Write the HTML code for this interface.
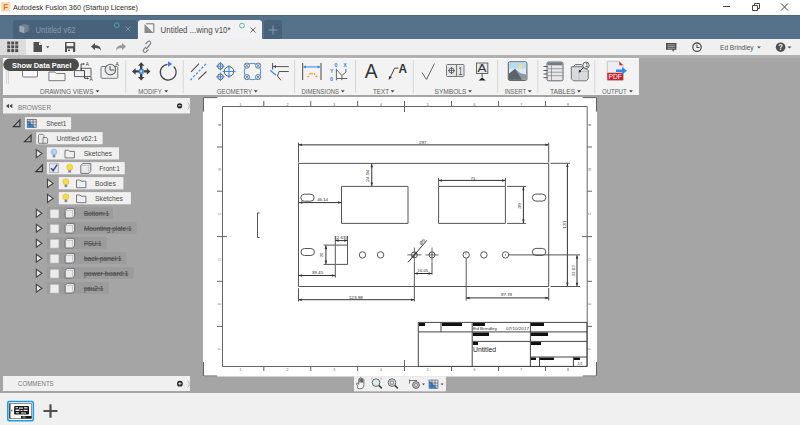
<!DOCTYPE html>
<html><head><meta charset="utf-8">
<style>
*{margin:0;padding:0}
html,body{width:800px;height:425px;overflow:hidden;background:#a5a5a5}
svg{position:absolute;left:0;top:0;font-family:"Liberation Sans",sans-serif}
</style></head><body>
<svg width="800" height="425" viewBox="0 0 800 425">
<rect x="0" y="0" width="800" height="425" fill="#a5a5a5"/>
<rect x="0" y="0" width="800" height="15" fill="#ffffff"/>
<rect x="1" y="2" width="9.5" height="9.5" fill="#fbdcb8"/>
<text x="3.20" y="10.00" font-size="9.01" fill="#e07a1f" font-weight="bold" textLength="5.00" lengthAdjust="spacingAndGlyphs">F</text>
<text x="13.00" y="10.00" font-size="7.99" fill="#2a2a2a" textLength="125.00" lengthAdjust="spacingAndGlyphs">Autodesk Fusion 360 (Startup License)</text>
<path d="M723 6.5h7" stroke="#444" stroke-width="1" fill="none"/>
<path d="M752.5 5.5h5v5h-5z M754.5 5.5v-2h5v5h-2" stroke="#444" stroke-width="1" fill="none"/>
<path d="M781 3.5l7 7M788 3.5l-7 7" stroke="#444" stroke-width="1" fill="none"/>
<rect x="0" y="15" width="800" height="24" fill="#56718a"/>
<rect x="0" y="15" width="800" height="0.6" fill="#4a6178"/>
<path d="M13 39V23a3 3 0 0 1 3-3h118a3 3 0 0 1 3 3v16z" stroke="none" stroke-width="1" fill="#48627b"/>
<path d="M19.5 25.8l4.5-1.8l4.8 1.2v5.8l-4.5 2l-4.8-1.4z" stroke="none" stroke-width="1" fill="#6f8090"/>
<path d="M19.5 25.8l4.8 1.3v6.1l-4.8-1.4z" stroke="none" stroke-width="1" fill="#9aa8b4"/>
<text x="35.60" y="32.60" font-size="8.43" fill="#8a9aa9" textLength="40.00" lengthAdjust="spacingAndGlyphs">Untitled v62</text>
<circle cx="116.8" cy="25.2" r="2.4" stroke="#45b29a" stroke-width="0.9" fill="none"/>
<path d="M125.5 26.5l5 5M130.5 26.5l-5 5" stroke="#7f8f9e" stroke-width="1" fill="none"/>
<path d="M138 39V23a3 3 0 0 1 3-3h118a3 3 0 0 1 3 3v16z" stroke="none" stroke-width="1" fill="#f2f2f4"/>
<path d="M144.5 23.5h9.5v9.5z" stroke="none" stroke-width="1" fill="none"/>
<path d="M144.5 24v9h9z" stroke="none" stroke-width="1" fill="#8a8a8a"/>
<path d="M146 23.8h7.8v9" stroke="#555" stroke-width="0.8" fill="none"/>
<text x="160.60" y="32.60" font-size="8.43" fill="#4a4a4a" textLength="70.00" lengthAdjust="spacingAndGlyphs">Untitled ...wing v10*</text>
<circle cx="242" cy="25.6" r="2.4" stroke="#45b29a" stroke-width="0.9" fill="none"/>
<path d="M250.5 27.5l5 5M255.5 27.5l-5 5" stroke="#666" stroke-width="1" fill="none"/>
<path d="M264 39V22a2 2 0 0 1 2-2h14a2 2 0 0 1 2 2v17z" stroke="none" stroke-width="1" fill="#48627b"/>
<path d="M268.5 30h9M273 25.5v9" stroke="#8d9cab" stroke-width="1" fill="none"/>
<rect x="0" y="39" width="800" height="16" fill="#f0f0f0"/>
<rect x="0" y="39" width="26" height="16" fill="#dcdcdc"/>
<rect x="7.2" y="41.5" width="3" height="3" fill="#505050"/>
<rect x="7.2" y="45.3" width="3" height="3" fill="#505050"/>
<rect x="7.2" y="49.1" width="3" height="3" fill="#505050"/>
<rect x="11.2" y="41.5" width="3" height="3" fill="#505050"/>
<rect x="11.2" y="45.3" width="3" height="3" fill="#505050"/>
<rect x="11.2" y="49.1" width="3" height="3" fill="#505050"/>
<rect x="15.2" y="41.5" width="3" height="3" fill="#505050"/>
<rect x="15.2" y="45.3" width="3" height="3" fill="#505050"/>
<rect x="15.2" y="49.1" width="3" height="3" fill="#505050"/>
<path d="M33.5 42h5.5l3 3v7h-8.5z" stroke="none" stroke-width="1" fill="#505050"/>
<path d="M39 42v3h3" stroke="none" stroke-width="1" fill="#f0f0f0"/>
<path d="M46 46.3h3.4l-1.7 2z" stroke="none" stroke-width="1" fill="#505050"/>
<path d="M65 42h9.5l0.7 0.7v9.3h-10.2z" stroke="none" stroke-width="1" fill="#505050"/>
<rect x="66.5" y="43" width="7" height="3.2" fill="#f0f0f0"/>
<rect x="67" y="48.5" width="6" height="3.5" fill="#f0f0f0"/>
<rect x="68" y="49.5" width="2" height="1.5" fill="#505050"/>
<path d="M91 46.5l4-3.5v2.2c3.5 0 6 1.5 6 5.5c-1-2-3-2.6-6-2.6v2.2z" stroke="none" stroke-width="1" fill="#505050"/>
<path d="M126 46.5l-4-3.5v2.2c-3.5 0-6 1.5-6 5.5c1-2 3-2.6 6-2.6v2.2z" stroke="none" stroke-width="1" fill="#9a9a9a"/>
<path d="M146 47l-2.5 2.5a1.8 1.8 0 0 0 2.5 2.5l2.5-2.5M148 46.5l2.5-2.5a1.8 1.8 0 0 0-2.5-2.5l-2.5 2.5M146 49l3.5-3.5" stroke="#808080" stroke-width="1.1" fill="none"/>
<path d="M666 43h10.4v6.8h-2l-1.2 2l-1.2-2h-6z" stroke="none" stroke-width="1" fill="#505050"/>
<path d="M667.6 44.9h7.2M667.6 46.6h7.2M667.6 48.3h7.2" stroke="#d8d8d8" stroke-width="0.6" fill="none"/>
<circle cx="697" cy="47.2" r="4.2" stroke="#505050" stroke-width="1.3" fill="none"/>
<path d="M697 44.5v3h2.5" stroke="#505050" stroke-width="1.1" fill="none"/>
<text x="720.00" y="50.00" font-size="7.85" fill="#555555" textLength="33.60" lengthAdjust="spacingAndGlyphs">Ed Brindley</text>
<path d="M757 46.5h4l-2 2z" stroke="none" stroke-width="1" fill="#505050"/>
<circle cx="780.6" cy="47.2" r="4.8" stroke="none" stroke-width="1" fill="#505050"/>
<text x="778.30" y="50.20" font-size="9.01" fill="#f0f0f0" font-weight="bold" textLength="4.60" lengthAdjust="spacingAndGlyphs">?</text>
<path d="M787.5 46.5h4l-2 2z" stroke="none" stroke-width="1" fill="#505050"/>
<rect x="0" y="55" width="800" height="3" fill="#b0b0b0"/>
<rect x="3" y="58" width="636" height="37" fill="#f3f3f3"/>
<path d="M3.5 95V58.5H639" stroke="#fcfcfc" stroke-width="1" fill="none"/>
<path d="M6.5 60v24M8.5 60v24" stroke="#cfcfcf" stroke-width="0.8" fill="none"/>
<path d="M125.75 60v33" stroke="#d6d6d6" stroke-width="1" fill="none"/>
<path d="M183.2 60v33" stroke="#d6d6d6" stroke-width="1" fill="none"/>
<path d="M294.6 60v33" stroke="#d6d6d6" stroke-width="1" fill="none"/>
<path d="M355.6 60v33" stroke="#d6d6d6" stroke-width="1" fill="none"/>
<path d="M413.3 60v33" stroke="#d6d6d6" stroke-width="1" fill="none"/>
<path d="M497.7 60v33" stroke="#d6d6d6" stroke-width="1" fill="none"/>
<path d="M537.9 60v33" stroke="#d6d6d6" stroke-width="1" fill="none"/>
<path d="M594.8 60v33" stroke="#d6d6d6" stroke-width="1" fill="none"/>
<text x="40.00" y="93.70" font-size="6.83" fill="#5f5f5f" textLength="53.50" lengthAdjust="spacingAndGlyphs">DRAWING VIEWS</text>
<path d="M95.6 90.3h3.8l-1.9 2.3z" stroke="none" stroke-width="1" fill="#444"/>
<text x="138.20" y="93.70" font-size="6.83" fill="#5f5f5f" textLength="23.50" lengthAdjust="spacingAndGlyphs">MODIFY</text>
<path d="M164.4 90.3h3.8l-1.9 2.3z" stroke="none" stroke-width="1" fill="#444"/>
<text x="216.80" y="93.70" font-size="6.83" fill="#5f5f5f" textLength="35.20" lengthAdjust="spacingAndGlyphs">GEOMETRY</text>
<path d="M253.9 90.3h3.8l-1.9 2.3z" stroke="none" stroke-width="1" fill="#444"/>
<text x="301.60" y="93.70" font-size="6.83" fill="#5f5f5f" textLength="37.40" lengthAdjust="spacingAndGlyphs">DIMENSIONS</text>
<path d="M340.90000000000003 90.3h3.8l-1.9 2.3z" stroke="none" stroke-width="1" fill="#444"/>
<text x="373.00" y="93.70" font-size="6.83" fill="#5f5f5f" textLength="16.00" lengthAdjust="spacingAndGlyphs">TEXT</text>
<path d="M390.70000000000005 90.3h3.8l-1.9 2.3z" stroke="none" stroke-width="1" fill="#444"/>
<text x="434.50" y="93.70" font-size="6.83" fill="#5f5f5f" textLength="31.90" lengthAdjust="spacingAndGlyphs">SYMBOLS</text>
<path d="M468.1 90.3h3.8l-1.9 2.3z" stroke="none" stroke-width="1" fill="#444"/>
<text x="504.70" y="93.70" font-size="6.83" fill="#5f5f5f" textLength="21.30" lengthAdjust="spacingAndGlyphs">INSERT</text>
<path d="M527.9 90.3h3.8l-1.9 2.3z" stroke="none" stroke-width="1" fill="#444"/>
<text x="550.00" y="93.70" font-size="6.83" fill="#5f5f5f" textLength="25.30" lengthAdjust="spacingAndGlyphs">TABLES</text>
<path d="M577.1 90.3h3.8l-1.9 2.3z" stroke="none" stroke-width="1" fill="#444"/>
<text x="602.00" y="93.70" font-size="6.83" fill="#5f5f5f" textLength="24.60" lengthAdjust="spacingAndGlyphs">OUTPUT</text>
<path d="M629.1 90.3h3.8l-1.9 2.3z" stroke="none" stroke-width="1" fill="#444"/>
<rect x="22.5" y="66" width="15" height="11" fill="#f8f8fa" rx="1" stroke="#7a7a7a" stroke-width="1"/>
<path d="M48.9 72h6l1.5 1.5h8.6v7.2h-16.1z" stroke="#7a7a7a" stroke-width="1" fill="#f5f5f7"/>
<path d="M74.4 70.6H81.1V68.3H91V76.6H74.4Z" stroke="#606060" stroke-width="1" fill="#eef0f3"/>
<path d="M81.1 64V70.6H84.5V78.3H87.5" stroke="#333" stroke-width="0.9" fill="none"/>
<path d="M81.1 64H83.5" stroke="#333" stroke-width="0.9" fill="none"/>
<path d="M83.3 62.9l1.6 1.1l-1.6 1.1zM87.3 77.2l1.6 1.1l-1.6 1.1z" stroke="none" stroke-width="1" fill="#222"/>
<text x="85.80" y="66.30" font-size="5.23" fill="#333" textLength="3.20" lengthAdjust="spacingAndGlyphs">A</text>
<text x="89.60" y="80.60" font-size="5.23" fill="#333" textLength="3.20" lengthAdjust="spacingAndGlyphs">A</text>
<rect x="101" y="66.5" width="16.8" height="11.8" fill="#eef0f2" rx="1" stroke="#777" stroke-width="1"/>
<circle cx="110.4" cy="69.6" r="5.3" stroke="#6a6a6a" stroke-width="1.1" fill="#e6e8ea"/>
<path d="M110 66v4h4.5" stroke="#555" stroke-width="1" fill="none"/>
<text x="115.50" y="66.00" font-size="5.09" fill="#333">A</text>
<path d="M141.2 62.2l3.3 3.6h-2.1v3.4h-2.4v-3.4h-2.1z M141.2 80.6l3.3-3.6h-2.1v-3.4h-2.4v3.4h-2.1z M132 71.4l3.6-3.3v2.1h3.4v2.4h-3.4v2.1z M150.4 71.4l-3.6-3.3v2.1h-3.4v2.4h3.4v2.1z" stroke="none" stroke-width="1" fill="#3f3f3f"/>
<rect x="138.8" y="69" width="4.8" height="4.8" fill="#3a8ee6"/>
<rect x="140.3" y="70.5" width="1.8" height="1.8" fill="#e6f0fa"/>
<path d="M167.5 64.3A7.9 7.9 0 1 0 173.7 66.5" stroke="#454545" stroke-width="1.2" fill="none"/>
<path d="M168 61.3l4.2 2.7l-4.2 2.7z" stroke="none" stroke-width="1" fill="#2f86e8"/>
<path d="M191.1 71.9L199 63.6M198.3 79.4L206.5 71.5" stroke="#505050" stroke-width="1.1" fill="none"/>
<path d="M190.4 80.1L206.5 63.25" stroke="#3a8ee6" stroke-width="1.2" fill="none" stroke-dasharray="2.5 1.5"/>
<circle cx="220.4" cy="66.3" r="2.8" stroke="#555" stroke-width="1" fill="none"/>
<path d="M216.20000000000002 66.3h8.4M220.4 62.099999999999994v8.4" stroke="#3a8ee6" stroke-width="1.1" fill="none"/>
<circle cx="220.4" cy="76.8" r="2.8" stroke="#555" stroke-width="1" fill="none"/>
<path d="M216.20000000000002 76.8h8.4M220.4 72.6v8.4" stroke="#3a8ee6" stroke-width="1.1" fill="none"/>
<circle cx="229" cy="71.5" r="4.8" stroke="#555" stroke-width="1" fill="none"/>
<path d="M222.5 71.5h13.0M229 65.0v13.0" stroke="#3a8ee6" stroke-width="1.1" fill="none"/>
<circle cx="252.5" cy="71.5" r="8.2" stroke="#3a8ee6" stroke-width="1" fill="none"/>
<circle cx="246.9" cy="65.6" r="2.6" stroke="#777" stroke-width="1" fill="#f3f3f3"/>
<path d="M245.1 63.8l3.6 3.6M248.70000000000002 63.8l-3.6 3.6" stroke="#3a8ee6" stroke-width="1" fill="none"/>
<circle cx="258.1" cy="65.6" r="2.6" stroke="#777" stroke-width="1" fill="#f3f3f3"/>
<path d="M256.3 63.8l3.6 3.6M259.90000000000003 63.8l-3.6 3.6" stroke="#3a8ee6" stroke-width="1" fill="none"/>
<circle cx="246.9" cy="77.1" r="2.6" stroke="#777" stroke-width="1" fill="#f3f3f3"/>
<path d="M245.1 75.3l3.6 3.6M248.70000000000002 75.3l-3.6 3.6" stroke="#3a8ee6" stroke-width="1" fill="none"/>
<circle cx="258.1" cy="77.1" r="2.6" stroke="#777" stroke-width="1" fill="#f3f3f3"/>
<path d="M256.3 75.3l3.6 3.6M259.90000000000003 75.3l-3.6 3.6" stroke="#3a8ee6" stroke-width="1" fill="none"/>
<path d="M272.6 63v6.6M272.6 66.6H288.8M279 71.5H288.8M279 71.5L277.4 76L281 80.3" stroke="#555" stroke-width="1" fill="none"/>
<path d="M273 66.6l3-1.5v3z" stroke="none" stroke-width="1" fill="#444"/>
<path d="M270.3 70.3L276 75.3" stroke="#3a8ee6" stroke-width="1.2" fill="none"/>
<path d="M302.6 62.9v17.2M321 62.9v17.2" stroke="#666" stroke-width="1.2" fill="none"/>
<path d="M303.5 66.9h16.6" stroke="#3a8ee6" stroke-width="1.1" fill="none"/>
<path d="M303.3 66.9l2.7-1.6v3.2zM320.3 66.9l-2.7-1.6v3.2z" stroke="none" stroke-width="1" fill="#3a8ee6"/>
<path d="M307.5 77l1.8-1M309.5 74.5l1-1.3M312 72.8v1.6M314 73.3l0.9 1.5M315.6 76l1.8 0.9" stroke="#f0a020" stroke-width="1.4" fill="none"/>
<path d="M336.4 68.8v11.5M336.4 78.5h11M336.4 69.5l5.5 6v4.7M341.9 75.5l4-3.5v-3" stroke="#666" stroke-width="1" fill="none"/>
<text x="334.50" y="67.00" font-size="5.23" fill="#2f86e8" font-weight="bold">0</text>
<text x="343.20" y="67.00" font-size="5.23" fill="#2f86e8" font-weight="bold">X</text>
<text x="330.00" y="72.50" font-size="5.23" fill="#2f86e8" font-weight="bold">Y</text>
<text x="330.00" y="80.50" font-size="5.23" fill="#2f86e8" font-weight="bold">0</text>
<text x="364.70" y="78.30" font-size="19.62" fill="#333" textLength="12.80" lengthAdjust="spacingAndGlyphs">A</text>
<text x="398.60" y="72.60" font-size="13.08" fill="#333" font-weight="bold" textLength="8.50" lengthAdjust="spacingAndGlyphs">A</text>
<path d="M398.4 68.1h-3.8L390 78" stroke="#444" stroke-width="1" fill="none"/>
<path d="M388.6 80l0.6-4l2.6 1.2z" stroke="none" stroke-width="1" fill="#333"/>
<path d="M422 72.5L426.5 79.5L434.5 63.5" stroke="#666" stroke-width="1" fill="none"/>
<rect x="446.5" y="64.5" width="17.5" height="12" fill="#e4e6ea" rx="1" stroke="#777" stroke-width="1"/>
<path d="M456.5 64.5v12" stroke="#777" stroke-width="1" fill="none"/>
<circle cx="451.5" cy="70.5" r="2.5" stroke="#555" stroke-width="0.9" fill="none"/>
<path d="M448 70.5h7M451.5 67v7" stroke="#555" stroke-width="0.8" fill="none"/>
<text x="458.40" y="74.50" font-size="10.17" fill="#444" textLength="3.80" lengthAdjust="spacingAndGlyphs">1</text>
<rect x="476.5" y="63" width="11.3" height="10.5" fill="#e6e8ea" stroke="#666" stroke-width="1"/>
<text x="477.60" y="71.80" font-size="10.90" fill="#333" textLength="9.00" lengthAdjust="spacingAndGlyphs">A</text>
<path d="M482.1 73.5v4" stroke="#555" stroke-width="1" fill="none"/>
<path d="M478.5 80.6h7.3l-3.65-3.2z" stroke="none" stroke-width="1" fill="#222"/>
<rect x="508.3" y="61.8" width="18.6" height="18.6" fill="#d9edf8" rx="1.5" stroke="#5a5a5a" stroke-width="1"/>
<rect x="509" y="62.5" width="17.2" height="6" fill="#b8dcf2"/>
<circle cx="520.5" cy="66.5" r="2" stroke="none" stroke-width="1" fill="#f6e27a"/>
<path d="M509 79.8v-6l6-5l5.5 4.5l6.4 1.5v5z" stroke="none" stroke-width="1" fill="#8e989f"/>
<path d="M509 79.8v-6l6-5l7 11z" stroke="none" stroke-width="1" fill="#5b636b"/>
<rect x="547" y="62" width="16" height="18.8" fill="#e8e8ea" rx="1.5" stroke="#606870" stroke-width="1"/>
<rect x="547.5" y="62.5" width="15" height="2.8" fill="#6e7b86"/>
<path d="M547.5 68.7h15M547.5 72.2h15M547.5 75.7h15M551.5 65.5v15" stroke="#888" stroke-width="0.8" fill="none"/>
<path d="M543.5 66.5h4M543.5 70.5h4M543.5 74h4M543.5 77.7h4" stroke="#555" stroke-width="1" fill="none"/>
<path d="M573.5 66.5l2-2h6l2 2v0M571.3 66.8h10.5l6.5 3.5v8.5l-2 2h-13l-2-2z" stroke="#6a6a6a" stroke-width="0.9" fill="#d8dadd"/>
<path d="M579 71.5v9M579 71.5h9" stroke="#bbb" stroke-width="0.8" fill="none"/>
<circle cx="586" cy="65.3" r="3.2" stroke="#555" stroke-width="0.9" fill="#f3f3f3"/>
<text x="585.00" y="67.00" font-size="6.10" fill="#333">1</text>
<path d="M583.5 67.5L579.5 71.5" stroke="#333" stroke-width="1" fill="none"/>
<path d="M578.6 72.4l0.5-2.8l2.3 2.3z" stroke="none" stroke-width="1" fill="#333"/>
<path d="M607.3 61.4h12l3.9 3.9v14.9h-15.9z" stroke="#aaa" stroke-width="0.6" fill="#eceef1"/>
<path d="M619.3 61.4l3.9 3.9h-3.9z" stroke="none" stroke-width="1" fill="#d4262c"/>
<rect x="607.3" y="72.8" width="15.9" height="7.4" fill="#c8232a" rx="0.8"/>
<text x="608.60" y="79.30" font-size="7.56" fill="#ffffff" textLength="13.30" lengthAdjust="spacingAndGlyphs">PDF</text>
<path d="M616 69.5h6v-2.6l5 3.8l-5 3.8v-2.6h-6z" stroke="none" stroke-width="1" fill="#2f8be6"/>
<rect x="3" y="98" width="187" height="15.5" fill="#f0f0f0"/>
<path d="M6 106l3-2.2v4.4zM9.3 106l3-2.2v4.4z" stroke="none" stroke-width="1" fill="#444"/>
<text x="18.00" y="109.60" font-size="7.41" fill="#787878" textLength="33.00" lengthAdjust="spacingAndGlyphs">BROWSER</text>
<circle cx="179.6" cy="105.8" r="2.6" stroke="none" stroke-width="1" fill="#222"/>
<path d="M178 105.8h3.2" stroke="#f0f0f0" stroke-width="0.9" fill="none"/>
<path d="M187.5 102.5l1.5 1.5v4l-1.5 1.5" stroke="#bbb" stroke-width="1" fill="none"/>
<path d="M13.3 126.6h6.6v-6.8z" stroke="#333" stroke-width="1.1" fill="#a8a8a8"/>
<rect x="25" y="117.1" width="46.1" height="12.2" fill="#f0f0f0"/>
<rect x="27.2" y="119.5" width="9" height="8" fill="#dfe3e8" stroke="#555" stroke-width="0.7"/>
<path d="M27.2 119.5v8h8z" stroke="none" stroke-width="1" fill="#3e8ee6"/>
<path d="M30 119.5v8M33 119.5v8M27.2 122h9M27.2 124.8h9" stroke="#444" stroke-width="0.6" fill="none"/>
<text x="46.20" y="125.80" font-size="7.12" fill="#4a4a4a" textLength="20.10" lengthAdjust="spacingAndGlyphs">Sheet1</text>
<path d="M24.5 141.8h6.6v-6.8z" stroke="#333" stroke-width="1.1" fill="#a8a8a8"/>
<rect x="36.2" y="132.1" width="66.4" height="12.2" fill="#f0f0f0"/>
<path d="M38.5 135.5l1-1.2h3.5l1 1.2v7.8h-5.5z" stroke="#6a6a6a" stroke-width="0.8" fill="#e8eaee"/>
<path d="M43 137.6h4l0.6 0.8v4.9h-4.6z" stroke="#6a6a6a" stroke-width="0.8" fill="#e8eaee"/>
<text x="56.50" y="140.80" font-size="7.12" fill="#4a4a4a" textLength="40.80" lengthAdjust="spacingAndGlyphs">Untitled v62:1</text>
<path d="M36.3 149.6v8l5.6-4z" stroke="#444" stroke-width="1.1" fill="#e8e8e8"/>
<rect x="46.8" y="147.3" width="72.2" height="12.2" fill="#f0f0f0"/>
<circle cx="54.0" cy="152.0" r="3" stroke="#8fb2e6" stroke-width="0.6" fill="#b3cdf2"/>
<rect x="52.699999999999996" y="154.8" width="2.6" height="2.6" fill="#8a8a8a"/>
<path d="M65 150.2h3.5l1 1.2h4.9v6.5h-9.4z" stroke="#6b6b6b" stroke-width="0.9" fill="#eef0f3"/>
<text x="83.80" y="155.90" font-size="7.12" fill="#4a4a4a" textLength="28.20" lengthAdjust="spacingAndGlyphs">Sketches</text>
<path d="M35.8 171.6h6.6v-6.8z" stroke="#333" stroke-width="1.1" fill="#a8a8a8"/>
<rect x="46.8" y="162.1" width="77.9" height="12.2" fill="#f0f0f0"/>
<rect x="49.6" y="163.7" width="9" height="9" fill="#e4e6e8" stroke="#a9a9a9" stroke-width="0.8"/>
<path d="M51.1 168.2l2 2.5l4-6" stroke="#344a8a" stroke-width="1.4" fill="none"/>
<circle cx="69.69999999999999" cy="167.2" r="3" stroke="#e0b820" stroke-width="0.6" fill="#f5dc4a"/>
<rect x="68.39999999999999" y="170" width="2.6" height="2.6" fill="#8a8a8a"/>
<path d="M80.8 165.4l2-2h8v8l-2 2h-8z" stroke="#6a6a6a" stroke-width="0.9" fill="#eaeaee"/>
<path d="M80.8 165.4h8v8M88.8 165.4l2-2" stroke="#aaa" stroke-width="0.6" fill="none"/>
<text x="99.20" y="170.90" font-size="7.12" fill="#4a4a4a" textLength="20.80" lengthAdjust="spacingAndGlyphs">Front:1</text>
<path d="M47.5 179.4v8l5.6-4z" stroke="#444" stroke-width="1.1" fill="#e8e8e8"/>
<rect x="58.8" y="177.1" width="64.6" height="12.2" fill="#f0f0f0"/>
<circle cx="65.89999999999999" cy="181.79999999999998" r="3" stroke="#e0b820" stroke-width="0.6" fill="#f5dc4a"/>
<rect x="64.6" y="184.6" width="2.6" height="2.6" fill="#8a8a8a"/>
<path d="M76.5 180h3.5l1 1.2h4.9v6.5h-9.4z" stroke="#6b6b6b" stroke-width="0.9" fill="#eef0f3"/>
<text x="95.00" y="185.80" font-size="7.12" fill="#4a4a4a" textLength="20.80" lengthAdjust="spacingAndGlyphs">Bodies</text>
<path d="M47.5 194.4v8l5.6-4z" stroke="#444" stroke-width="1.1" fill="#e8e8e8"/>
<rect x="58.8" y="192.1" width="72.1" height="12.2" fill="#f0f0f0"/>
<circle cx="65.89999999999999" cy="196.79999999999998" r="3" stroke="#e0b820" stroke-width="0.6" fill="#f5dc4a"/>
<rect x="64.6" y="199.6" width="2.6" height="2.6" fill="#8a8a8a"/>
<path d="M76.5 195h3.5l1 1.2h4.9v6.5h-9.4z" stroke="#6b6b6b" stroke-width="0.9" fill="#eef0f3"/>
<text x="95.00" y="200.80" font-size="7.12" fill="#4a4a4a" textLength="28.00" lengthAdjust="spacingAndGlyphs">Sketches</text>
<path d="M36.3 209.2v8l5.6-4z" stroke="#444" stroke-width="1.1" fill="#e8e8e8"/>
<rect x="46.8" y="207.2" width="66.2" height="11.6" fill="#9c9c9c"/>
<rect x="50.0" y="209.2" width="9" height="9" fill="#ececec" stroke="#a9a9a9" stroke-width="0.8"/>
<path d="M65.2 210.39999999999998l2-2h7.4v7.6l-2 2h-7.4z" stroke="#6a6a6a" stroke-width="0.9" fill="#eaeaee"/>
<path d="M65.2 210.39999999999998h7.4v7.6M72.60000000000001 210.39999999999998l2-2" stroke="#aaa" stroke-width="0.6" fill="none"/>
<text x="83.90" y="216.00" font-size="7.12" fill="#474747" textLength="25.20" lengthAdjust="spacingAndGlyphs">Bottom:1</text>
<path d="M83.9 213.79999999999998h25.2" stroke="#474747" stroke-width="0.8" fill="none"/>
<path d="M36.3 224.2v8l5.6-4z" stroke="#444" stroke-width="1.1" fill="#e8e8e8"/>
<rect x="46.8" y="222.2" width="89.7" height="11.6" fill="#9c9c9c"/>
<rect x="50.0" y="224.2" width="9" height="9" fill="#ececec" stroke="#a9a9a9" stroke-width="0.8"/>
<path d="M65.2 225.39999999999998l2-2h7.4v7.6l-2 2h-7.4z" stroke="#6a6a6a" stroke-width="0.9" fill="#eaeaee"/>
<path d="M65.2 225.39999999999998h7.4v7.6M72.60000000000001 225.39999999999998l2-2" stroke="#aaa" stroke-width="0.6" fill="none"/>
<text x="83.90" y="231.00" font-size="7.12" fill="#474747" textLength="47.70" lengthAdjust="spacingAndGlyphs">Mounting plate:1</text>
<path d="M83.9 228.79999999999998h47.7" stroke="#474747" stroke-width="0.8" fill="none"/>
<path d="M36.3 239.2v8l5.6-4z" stroke="#444" stroke-width="1.1" fill="#e8e8e8"/>
<rect x="46.8" y="237.2" width="59.8" height="11.6" fill="#9c9c9c"/>
<rect x="50.0" y="239.2" width="9" height="9" fill="#ececec" stroke="#a9a9a9" stroke-width="0.8"/>
<path d="M65.2 240.39999999999998l2-2h7.4v7.6l-2 2h-7.4z" stroke="#6a6a6a" stroke-width="0.9" fill="#eaeaee"/>
<path d="M65.2 240.39999999999998h7.4v7.6M72.60000000000001 240.39999999999998l2-2" stroke="#aaa" stroke-width="0.6" fill="none"/>
<text x="83.90" y="246.00" font-size="7.12" fill="#474747" textLength="17.50" lengthAdjust="spacingAndGlyphs">PSU:1</text>
<path d="M83.9 243.79999999999998h17.5" stroke="#474747" stroke-width="0.8" fill="none"/>
<path d="M36.3 254.2v8l5.6-4z" stroke="#444" stroke-width="1.1" fill="#e8e8e8"/>
<rect x="46.8" y="252.2" width="79.6" height="11.6" fill="#9c9c9c"/>
<rect x="50.0" y="254.2" width="9" height="9" fill="#ececec" stroke="#a9a9a9" stroke-width="0.8"/>
<path d="M65.2 255.39999999999998l2-2h7.4v7.6l-2 2h-7.4z" stroke="#6a6a6a" stroke-width="0.9" fill="#eaeaee"/>
<path d="M65.2 255.39999999999998h7.4v7.6M72.60000000000001 255.39999999999998l2-2" stroke="#aaa" stroke-width="0.6" fill="none"/>
<text x="83.90" y="261.00" font-size="7.12" fill="#474747" textLength="37.50" lengthAdjust="spacingAndGlyphs">back panel:1</text>
<path d="M83.9 258.8h37.5" stroke="#474747" stroke-width="0.8" fill="none"/>
<path d="M36.3 269.2v8l5.6-4z" stroke="#444" stroke-width="1.1" fill="#e8e8e8"/>
<rect x="46.8" y="267.2" width="87.2" height="11.6" fill="#9c9c9c"/>
<rect x="50.0" y="269.2" width="9" height="9" fill="#ececec" stroke="#a9a9a9" stroke-width="0.8"/>
<path d="M65.2 270.4l2-2h7.4v7.6l-2 2h-7.4z" stroke="#6a6a6a" stroke-width="0.9" fill="#eaeaee"/>
<path d="M65.2 270.4h7.4v7.6M72.60000000000001 270.4l2-2" stroke="#aaa" stroke-width="0.6" fill="none"/>
<text x="83.90" y="276.00" font-size="7.12" fill="#474747" textLength="44.50" lengthAdjust="spacingAndGlyphs">power board:1</text>
<path d="M83.9 273.8h44.5" stroke="#474747" stroke-width="0.8" fill="none"/>
<path d="M36.3 284.2v8l5.6-4z" stroke="#444" stroke-width="1.1" fill="#e8e8e8"/>
<rect x="46.8" y="282.2" width="62.2" height="11.6" fill="#9c9c9c"/>
<rect x="50.0" y="284.2" width="9" height="9" fill="#ececec" stroke="#a9a9a9" stroke-width="0.8"/>
<path d="M65.2 285.4l2-2h7.4v7.6l-2 2h-7.4z" stroke="#6a6a6a" stroke-width="0.9" fill="#eaeaee"/>
<path d="M65.2 285.4h7.4v7.6M72.60000000000001 285.4l2-2" stroke="#aaa" stroke-width="0.6" fill="none"/>
<text x="83.90" y="291.00" font-size="7.12" fill="#474747" textLength="19.50" lengthAdjust="spacingAndGlyphs">psu2:1</text>
<path d="M83.9 288.8h19.5" stroke="#474747" stroke-width="0.8" fill="none"/>
<rect x="203" y="97" width="394" height="279.5" fill="#ffffff"/>
<path d="M203.5 111.7V97.6H217.4M582.6 97.6H596.5V111.7M203.5 362V376H217.2M582.6 376H596.5V362" stroke="#5e5e5e" stroke-width="1" fill="none"/>
<path d="M222.5 106.5H587.2V366.5H222.5Z" stroke="#666666" stroke-width="1" fill="none"/>
<path d="M263.8 101V106M263.8 366V371M310.75 101V106M310.75 366V371M357.6 101V106M357.6 366V371M451.5 101V106M451.5 366V371M498.5 101V106M498.5 366V371M545.5 101V106M545.5 366V371M404.5 101V112M404.5 360V371M217 147H222M587 147H592M217 191.2H222M587 191.2H592M217 281.3H222M587 281.3H592M217 326.4H222M587 326.4H592M217 236.6H227M582 236.6H592" stroke="#666666" stroke-width="1" fill="none"/>
<text x="239.6" y="106" font-size="3.5" fill="#666">1</text>
<text x="239.6" y="370.6" font-size="3.5" fill="#666">1</text>
<text x="286.40000000000003" y="106" font-size="3.5" fill="#666">2</text>
<text x="286.40000000000003" y="370.6" font-size="3.5" fill="#666">2</text>
<text x="333.20000000000005" y="106" font-size="3.5" fill="#666">3</text>
<text x="333.20000000000005" y="370.6" font-size="3.5" fill="#666">3</text>
<text x="380.1" y="106" font-size="3.5" fill="#666">4</text>
<text x="380.1" y="370.6" font-size="3.5" fill="#666">4</text>
<text x="426.8" y="106" font-size="3.5" fill="#666">5</text>
<text x="426.8" y="370.6" font-size="3.5" fill="#666">5</text>
<text x="473.5" y="106" font-size="3.5" fill="#666">6</text>
<text x="473.5" y="370.6" font-size="3.5" fill="#666">6</text>
<text x="520.3000000000001" y="106" font-size="3.5" fill="#666">7</text>
<text x="520.3000000000001" y="370.6" font-size="3.5" fill="#666">7</text>
<text x="567.1" y="106" font-size="3.5" fill="#666">8</text>
<text x="567.1" y="370.6" font-size="3.5" fill="#666">8</text>
<text transform="translate(220.6,126.1) rotate(-90)" font-size="3.5" fill="#666">A</text>
<text transform="translate(591.4,126.1) rotate(-90)" font-size="3.5" fill="#666">A</text>
<text transform="translate(220.6,170.6) rotate(-90)" font-size="3.5" fill="#666">B</text>
<text transform="translate(591.4,170.6) rotate(-90)" font-size="3.5" fill="#666">B</text>
<text transform="translate(220.6,215.1) rotate(-90)" font-size="3.5" fill="#666">C</text>
<text transform="translate(591.4,215.1) rotate(-90)" font-size="3.5" fill="#666">C</text>
<text transform="translate(220.6,260.5) rotate(-90)" font-size="3.5" fill="#666">D</text>
<text transform="translate(591.4,260.5) rotate(-90)" font-size="3.5" fill="#666">D</text>
<text transform="translate(220.6,305.1) rotate(-90)" font-size="3.5" fill="#666">E</text>
<text transform="translate(591.4,305.1) rotate(-90)" font-size="3.5" fill="#666">E</text>
<text transform="translate(220.6,350.1) rotate(-90)" font-size="3.5" fill="#666">F</text>
<text transform="translate(591.4,350.1) rotate(-90)" font-size="3.5" fill="#666">F</text>
<path d="M259.6 212.9H257.5V237.5H259.6" stroke="#555555" stroke-width="1" fill="none"/>
<path d="M298.5 163.4H548.7V286.5H298.5Z" stroke="#555555" stroke-width="1" fill="none"/>
<path d="M341.5 186.4H408V223.4H341.5Z M438.6 186.4H505.4V223.4H438.6Z" stroke="#555555" stroke-width="1" fill="none"/>
<rect x="300.8" y="194.2" width="13.4" height="7" fill="none" rx="3.5" stroke="#555555" stroke-width="1"/>
<rect x="301" y="248.5" width="13.4" height="7" fill="none" rx="3.5" stroke="#555555" stroke-width="1"/>
<rect x="532.4" y="194.1" width="13.4" height="7" fill="none" rx="3.5" stroke="#555555" stroke-width="1"/>
<rect x="532.4" y="248.4" width="13.4" height="7" fill="none" rx="3.5" stroke="#555555" stroke-width="1"/>
<path d="M335.3 245.1H347.5V264.4H335.3Z" stroke="#555555" stroke-width="1" fill="none"/>
<circle cx="362.5" cy="254.9" r="3.2" stroke="#555555" stroke-width="1" fill="none"/>
<circle cx="380.6" cy="254.9" r="3.2" stroke="#555555" stroke-width="1" fill="none"/>
<circle cx="466.2" cy="254.9" r="3.2" stroke="#555555" stroke-width="1" fill="none"/>
<circle cx="483.9" cy="254.9" r="3.2" stroke="#555555" stroke-width="1" fill="none"/>
<circle cx="505.5" cy="254.9" r="3.2" stroke="#555555" stroke-width="1" fill="none"/>
<circle cx="414.35" cy="254.9" r="3" stroke="#555555" stroke-width="1" fill="none"/>
<path d="M407.35 254.9H421.35M414.35 247.6V261.8" stroke="#555555" stroke-width="0.9" fill="none"/>
<circle cx="432" cy="254.9" r="3" stroke="#555555" stroke-width="1" fill="none"/>
<path d="M425.4 254.9H438.6M432 247.6V261.8" stroke="#555555" stroke-width="0.9" fill="none"/>
<path d="M466 251.5v3.5M505.6 254v2" stroke="#555555" stroke-width="0.6" fill="none"/>
<path d="M298.5 142.5V162.5M548.7 142.5V162.5" stroke="#555555" stroke-width="1" fill="none"/>
<path d="M298.5 144.86H548.7" stroke="#333" stroke-width="1" fill="none"/>
<path d="M298.5 144.86l3.4 -1.25v2.5z" stroke="none" stroke-width="1" fill="#333"/>
<path d="M548.7 144.86l-3.4 -1.25v2.5z" stroke="none" stroke-width="1" fill="#333"/>
<text x="419" y="144.2" font-size="4.3" fill="#2a2a2a" textLength="7.5" lengthAdjust="spacingAndGlyphs">297</text>
<path d="M371.75 163.8V186" stroke="#333" stroke-width="1" fill="none"/>
<path d="M371.75 163.8l-1.25 3.4h2.5z" stroke="none" stroke-width="1" fill="#333"/>
<path d="M371.75 186l-1.25 -3.4h2.5z" stroke="none" stroke-width="1" fill="#333"/>
<text transform="translate(369.3,181.8) rotate(-90)" x="0" y="0" font-size="4.3" fill="#2a2a2a" textLength="12.2" lengthAdjust="spacingAndGlyphs">24.94</text>
<path d="M298.9 202.6H341.4" stroke="#333" stroke-width="1" fill="none"/>
<path d="M298.9 202.6l3.4 -1.25v2.5z" stroke="none" stroke-width="1" fill="#333"/>
<path d="M341.4 202.6l-3.4 -1.25v2.5z" stroke="none" stroke-width="1" fill="#333"/>
<text x="317.2" y="201.2" font-size="4.3" fill="#2a2a2a" textLength="10.8" lengthAdjust="spacingAndGlyphs">46.14</text>
<path d="M438.6 178V186M505.4 178V186" stroke="#555555" stroke-width="1" fill="none"/>
<path d="M438.6 180.4H505.4" stroke="#333" stroke-width="1" fill="none"/>
<path d="M438.6 180.4l3.4 -1.25v2.5z" stroke="none" stroke-width="1" fill="#333"/>
<path d="M505.4 180.4l-3.4 -1.25v2.5z" stroke="none" stroke-width="1" fill="#333"/>
<text x="470.7" y="179.7" font-size="4.3" fill="#2a2a2a" textLength="4.4" lengthAdjust="spacingAndGlyphs">71</text>
<path d="M507.1 186.4H526M507.1 223.4H526" stroke="#555555" stroke-width="1" fill="none"/>
<path d="M523.4 186.8V223" stroke="#333" stroke-width="1" fill="none"/>
<path d="M523.4 186.8l-1.25 3.4h2.5z" stroke="none" stroke-width="1" fill="#333"/>
<path d="M523.4 223l-1.25 -3.4h2.5z" stroke="none" stroke-width="1" fill="#333"/>
<text transform="translate(520.8,208.8) rotate(-90)" x="0" y="0" font-size="4.3" fill="#2a2a2a" textLength="5.8" lengthAdjust="spacingAndGlyphs">39</text>
<path d="M550.6 163.3H570M550.6 286.5H580" stroke="#555555" stroke-width="1" fill="none"/>
<path d="M567.4 163.7V286.1" stroke="#333" stroke-width="1" fill="none"/>
<path d="M567.4 163.7l-1.25 3.4h2.5z" stroke="none" stroke-width="1" fill="#333"/>
<path d="M567.4 286.1l-1.25 -3.4h2.5z" stroke="none" stroke-width="1" fill="#333"/>
<text transform="translate(566.2,228.8) rotate(-90)" x="0" y="0" font-size="4.3" fill="#2a2a2a" textLength="8.2" lengthAdjust="spacingAndGlyphs">131</text>
<path d="M508.7 254.9H580" stroke="#555555" stroke-width="1" fill="none"/>
<path d="M577 255.3V286.1" stroke="#333" stroke-width="1" fill="none"/>
<path d="M577 255.3l-1.25 3.4h2.5z" stroke="none" stroke-width="1" fill="#333"/>
<path d="M577 286.1l-1.25 -3.4h2.5z" stroke="none" stroke-width="1" fill="#333"/>
<text transform="translate(574.7,276.6) rotate(-90)" x="0" y="0" font-size="4.3" fill="#2a2a2a" textLength="11.3" lengthAdjust="spacingAndGlyphs">33.63</text>
<path d="M466.2 258.2V300.5M548.7 288V300.5" stroke="#555555" stroke-width="1" fill="none"/>
<path d="M466.2 297.9H548.7" stroke="#333" stroke-width="1" fill="none"/>
<path d="M466.2 297.9l3.4 -1.25v2.5z" stroke="none" stroke-width="1" fill="#333"/>
<path d="M548.7 297.9l-3.4 -1.25v2.5z" stroke="none" stroke-width="1" fill="#333"/>
<text x="501.1" y="296.4" font-size="4.3" fill="#2a2a2a" textLength="10.9" lengthAdjust="spacingAndGlyphs">87.78</text>
<path d="M298.5 288.2V301.5M414.35 262V301.5" stroke="#555555" stroke-width="1" fill="none"/>
<path d="M298.5 299.7H414.35" stroke="#333" stroke-width="1" fill="none"/>
<path d="M298.5 299.7l3.4 -1.25v2.5z" stroke="none" stroke-width="1" fill="#333"/>
<path d="M414.35 299.7l-3.4 -1.25v2.5z" stroke="none" stroke-width="1" fill="#333"/>
<text x="348.8" y="298.5" font-size="4.3" fill="#2a2a2a" textLength="14.1" lengthAdjust="spacingAndGlyphs">123.98</text>
<path d="M335.3 264.4V277.6" stroke="#555555" stroke-width="1" fill="none"/>
<path d="M298.5 275.5H335.3" stroke="#333" stroke-width="1" fill="none"/>
<path d="M298.5 275.5l3.4 -1.25v2.5z" stroke="none" stroke-width="1" fill="#333"/>
<path d="M335.3 275.5l-3.4 -1.25v2.5z" stroke="none" stroke-width="1" fill="#333"/>
<text x="311.8" y="274.2" font-size="4.3" fill="#2a2a2a" textLength="11.4" lengthAdjust="spacingAndGlyphs">39.45</text>
<path d="M323.6 245.1H335M323.6 264.4H335" stroke="#555555" stroke-width="1" fill="none"/>
<path d="M325.9 245.5V264" stroke="#333" stroke-width="1" fill="none"/>
<path d="M325.9 245.5l-1.25 3.4h2.5z" stroke="none" stroke-width="1" fill="#333"/>
<path d="M325.9 264l-1.25 -3.4h2.5z" stroke="none" stroke-width="1" fill="#333"/>
<text transform="translate(323.3,257.3) rotate(-90)" x="0" y="0" font-size="4.3" fill="#2a2a2a" textLength="4.4" lengthAdjust="spacingAndGlyphs">20</text>
<path d="M335.3 236V245M347.5 236V245" stroke="#555555" stroke-width="1" fill="none"/>
<path d="M335.3 240.6H347.5" stroke="#333" stroke-width="1" fill="none"/>
<path d="M335.3 240.6l3.4 -1.25v2.5z" stroke="none" stroke-width="1" fill="#333"/>
<path d="M347.5 240.6l-3.4 -1.25v2.5z" stroke="none" stroke-width="1" fill="#333"/>
<text x="335.2" y="238.9" font-size="4.3" fill="#2a2a2a" textLength="11.8" lengthAdjust="spacingAndGlyphs">(2.63)</text>
<path d="M432 262V274.7" stroke="#555555" stroke-width="1" fill="none"/>
<path d="M414.35 273.5H432" stroke="#333" stroke-width="1" fill="none"/>
<path d="M414.35 273.5l3.4 -1.25v2.5z" stroke="none" stroke-width="1" fill="#333"/>
<path d="M432 273.5l-3.4 -1.25v2.5z" stroke="none" stroke-width="1" fill="#333"/>
<text x="417.6" y="272.2" font-size="4.3" fill="#2a2a2a" textLength="10.6" lengthAdjust="spacingAndGlyphs">16.05</text>
<path d="M408 262.4L426.8 240.4" stroke="#333" stroke-width="1" fill="none"/>
<path d="M411.6 258.2l0.9-3l1.6 1.4z M417.2 251.6l-0.9 3l-1.6-1.4z" stroke="none" stroke-width="1" fill="#333"/>
<text transform="translate(421.6,245.3) rotate(-55)" font-size="4.3" fill="#222" textLength="6.5" lengthAdjust="spacingAndGlyphs">Ø5</text>
<path d="M418.3 322.4H587V366.4H418.3Z M418.3 331.9H587 M472.2 341.4H587 M530.4 357H587 M441 322.4V331.9 M472.2 322.4V366.4 M530.4 322.4V366.4 M539.5 357V366.4 M573.4 357V366.4" stroke="#444" stroke-width="1" fill="none"/>
<rect x="419" y="323" width="6" height="3" fill="#111"/>
<rect x="442" y="323" width="20" height="3" fill="#111"/>
<rect x="473" y="323" width="12" height="3" fill="#111"/>
<rect x="473" y="332.5" width="16" height="3.5" fill="#111"/>
<rect x="473" y="342" width="5" height="3" fill="#111"/>
<rect x="531" y="323" width="13" height="3" fill="#111"/>
<rect x="531" y="332.5" width="17" height="3.5" fill="#111"/>
<rect x="531" y="342" width="10" height="3" fill="#111"/>
<rect x="531" y="357.6" width="5" height="2.3999999999999773" fill="#111"/>
<rect x="540" y="357.6" width="14" height="2.3999999999999773" fill="#111"/>
<rect x="574" y="357.6" width="6" height="2.3999999999999773" fill="#111"/>
<text x="473.00" y="330.30" font-size="4.07" fill="#333" textLength="24.00" lengthAdjust="spacingAndGlyphs">Ed Brindley</text>
<text x="506.00" y="330.30" font-size="4.07" fill="#333" textLength="23.00" lengthAdjust="spacingAndGlyphs">07/10/2017</text>
<text x="473.00" y="352.00" font-size="7.56" fill="#222" textLength="23.00" lengthAdjust="spacingAndGlyphs">Untitled</text>
<text x="577.50" y="364.60" font-size="4.07" fill="#333" textLength="5.00" lengthAdjust="spacingAndGlyphs">1/1</text>
<rect x="3" y="376" width="187" height="15" fill="#f0f0f0"/>
<text x="18.00" y="386.20" font-size="7.41" fill="#787878" textLength="35.70" lengthAdjust="spacingAndGlyphs">COMMENTS</text>
<circle cx="179.9" cy="383.7" r="2.9" stroke="none" stroke-width="1" fill="#222"/>
<path d="M178.3 383.7h3.2M179.9 382.1v3.2" stroke="#f0f0f0" stroke-width="0.9" fill="none"/>
<path d="M187.5 380.5l1.5 1.5v4l-1.5 1.5" stroke="#bbb" stroke-width="1" fill="none"/>
<rect x="354" y="376.2" width="92" height="15.1" fill="#f0f0f0"/>
<path d="M358 386.5l-1.5-2.5c-0.4-0.8 0.6-1.5 1.2-0.8l1 1.2v-5.2c0-0.9 1.3-0.9 1.3 0v3.3v-4.3c0-0.9 1.3-0.9 1.3 0v4.3v-3.8c0-0.9 1.3-0.9 1.3 0v3.8v-2.8c0-0.9 1.3-0.9 1.3 0v5c0 2.5-1.2 4-3.5 4h-1.2c-1 0-1.7-0.6-2.2-1.2z" stroke="#555" stroke-width="0.8" fill="#f6f6f6"/>
<circle cx="376" cy="382.6" r="3.8" stroke="#666" stroke-width="1" fill="#d9eef0"/>
<path d="M378.8 385.4l3 3" stroke="#444" stroke-width="1.6" fill="none"/>
<path d="M371.5 378.2h1.5M371.5 378.2v1.5M381.5 378.2h-1.5M381.5 378.2v1.5" stroke="#aaa" stroke-width="0.6" fill="none"/>
<circle cx="392" cy="382.6" r="3.8" stroke="#666" stroke-width="1" fill="#e2e6ea"/>
<rect x="390.3" y="381" width="3.2" height="3.2" fill="none" stroke="#666" stroke-width="0.7"/>
<path d="M394.8 385.4l3 3" stroke="#444" stroke-width="1.6" fill="none"/>
<path d="M409.5 379.5v4M409.5 380.5h7.5" stroke="#555" stroke-width="0.8" fill="none"/>
<circle cx="416" cy="385" r="3.4" stroke="#555" stroke-width="0.9" fill="#c8c8c8"/>
<circle cx="416" cy="385" r="1.5" stroke="#555" stroke-width="0.6" fill="#f0f0f0"/>
<path d="M422 383.5h3l-1.5 1.8z" stroke="none" stroke-width="1" fill="#444"/>
<rect x="429" y="380" width="9" height="8.5" fill="#dfe3e8" stroke="#555" stroke-width="0.6"/>
<path d="M429 380v8.5h8.5z" stroke="none" stroke-width="1" fill="#3e8ee6"/>
<path d="M432 380v8.5M435 380v8.5M429 383h9M429 385.8h9" stroke="#444" stroke-width="0.6" fill="none"/>
<path d="M440.6 383.5h3l-1.5 1.8z" stroke="none" stroke-width="1" fill="#444"/>
<rect x="0" y="393" width="800" height="32" fill="#f0f0f0"/>
<rect x="7.8" y="401.5" width="25.5" height="19.3" fill="#ffffff" rx="1.5" stroke="#1e9be6" stroke-width="1.6"/>
<path d="M9.8 403.5h21.7v15h-21.7z" stroke="#444" stroke-width="0.6" fill="none"/>
<path d="M9.8 403.5v15" stroke="#222" stroke-width="1" fill="none"/>
<rect x="14.1" y="406" width="14.9" height="8.5" fill="#1a1a1a" rx="1"/>
<rect x="15.5" y="407.2" width="2.5" height="1" fill="#e8e8e8"/>
<rect x="19" y="407.5" width="4" height="1.2" fill="#e8e8e8"/>
<rect x="24" y="407.2" width="3.5" height="1.2" fill="#e8e8e8"/>
<rect x="15.5" y="409.5" width="4" height="1.5" fill="#e8e8e8"/>
<rect x="20.5" y="410" width="2" height="1" fill="#e8e8e8"/>
<rect x="23.5" y="409.8" width="4" height="1.2" fill="#e8e8e8"/>
<rect x="16" y="412.3" width="3" height="1" fill="#e8e8e8"/>
<rect x="21" y="412.5" width="5" height="1" fill="#e8e8e8"/>
<rect x="21" y="416" width="10.5" height="2.5" fill="#1a1a1a"/>
<rect x="22.5" y="416.6" width="3" height="0.8" fill="#ddd"/>
<path d="M11.8 409.5v2" stroke="#333" stroke-width="0.8" fill="none"/>
<path d="M43.5 411h14M50.5 404.2v13.6" stroke="#505050" stroke-width="2.2" fill="none"/>
<rect x="3.3" y="58.6" width="75.7" height="12.3" fill="#4b4b4b" rx="6.1"/>
<text x="12.00" y="67.80" font-size="7.70" fill="#ffffff" font-weight="bold" textLength="59.50" lengthAdjust="spacingAndGlyphs">Show Data Panel</text>
</svg></body></html>
